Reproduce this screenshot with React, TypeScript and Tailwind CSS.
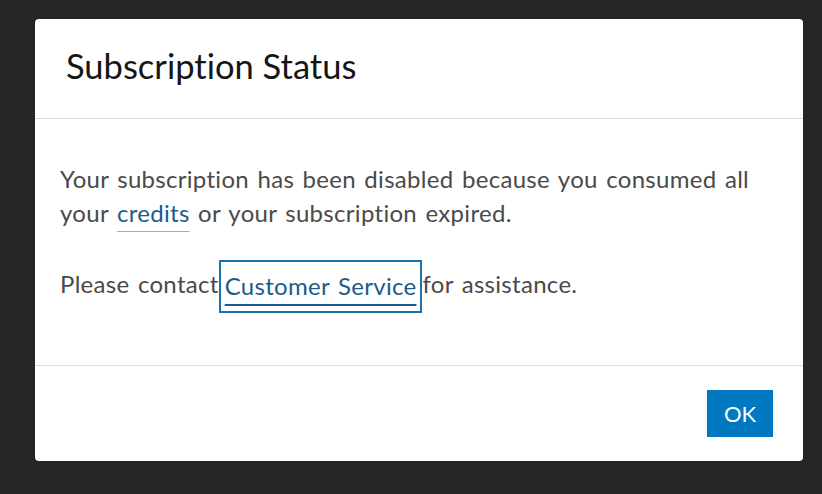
import React from "react";

export default function App() {
  return (
    <div className="w-[822px] h-[494px] bg-[#262626] pt-[19px] pl-[35px] [font-variant-ligatures:none]" style={{ fontFamily: "Lato, 'Noto Sans', sans-serif" }}>
      <div className="w-[768px] h-[442px] bg-white rounded-[4px] flex flex-col">
        <div className="h-[100px] border-b border-[#dddddd] pl-[31px] pt-[26px]">
          <h1 className="text-[34.5px] leading-[42px] text-[#151515]">Subscription Status</h1>
        </div>
        <div className="flex-1 pl-[25px] pr-[30px] pt-[43px] text-[24px] leading-[34px] text-[#4a4a4a] tracking-[0.3px] [word-spacing:2px]">
          <p>
            Your subscription has been disabled because you consumed all your{" "}
            <a className="text-[#1b5c8a] underline decoration-[#8fb4d0] decoration-1 underline-offset-[9px]">credits</a> or your subscription expired.
          </p>
          <p className="mt-[37px]">
            Please contact
            <a className="inline-block border-2 border-[#1a72aa] px-[4px] leading-[47px] h-[53px] align-middle -my-[10px] text-[#1b5c8a] underline decoration-[#1b5c8a] decoration-2 underline-offset-[9px]">
              Customer Service
            </a>
            for assistance.
          </p>
        </div>
        <div className="h-[96px] border-t border-[#dddddd] flex justify-end items-start pt-[24px] pr-[30px]">
          <button className="w-[66px] h-[47px] bg-[#0079c1] text-white text-[22px]">OK</button>
        </div>
      </div>
    </div>
  );
}
